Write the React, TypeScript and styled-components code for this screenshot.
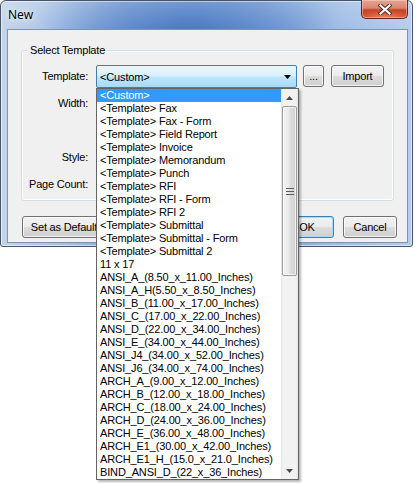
import React from 'react';
import styled, { createGlobalStyle } from 'styled-components';

const Global = createGlobalStyle`
  html, body { margin: 0; padding: 0; background: #ffffff; }
  body {
    font-family: "Liberation Sans", Arial, sans-serif;
    font-size: 11px;
    color: #000;
  }
  * { box-sizing: border-box; }
`;

const Page = styled.div`
  width: 416px;
  height: 483px;
  position: relative;
`;

const Window = styled.div`
  width: 413px;
  height: 247px;
  border: 1px solid #44556b;
  border-radius: 6px 6px 3px 3px;
  display: flex;
  flex-direction: column;
  background:
    linear-gradient(to bottom, rgba(255, 255, 255, 0.18) 0%, rgba(255, 255, 255, 0) 30px),
    radial-gradient(ellipse 150px 70px at 45% 10%, rgba(70, 118, 192, 0.9) 0%, rgba(80, 126, 198, 0.5) 55%, rgba(90, 134, 200, 0) 100%),
    linear-gradient(to right, #c4d4ea 0%, #a9c2e6 14%, #7ba2d8 32%, #6490cf 48%, #7aa1d8 64%, #a1bee6 84%, #b6cdea 100%);
  box-shadow: inset 0 0 0 1px rgba(255, 255, 255, 0.5);
`;

const TitleBar = styled.div`
  height: 28px;
  display: flex;
  align-items: flex-start;
  justify-content: space-between;
  padding: 0 4px 0 7px;
`;

const Title = styled.div`
  font-family: "Noto Sans", "Open Sans", sans-serif;
  font-size: 12px;
  line-height: 28px;
  color: #000;
  text-shadow: 0 0 8px rgba(255, 255, 255, 0.9), 0 0 3px rgba(255, 255, 255, 0.8);
`;

const CloseButton = styled.div`
  width: 47px;
  height: 19px;
  margin-top: -1px;
  border: 1px solid #5a2a22;
  border-top: none;
  border-radius: 0 0 5px 5px;
  background:
    radial-gradient(ellipse 30px 8px at 50% 100%, rgba(255, 140, 90, 0.8), rgba(255, 120, 80, 0) 100%),
    linear-gradient(to bottom, #e3a593 0%, #d88672 45%, #c5452b 55%, #c9472c 100%);
  box-shadow: inset 0 0 0 1px rgba(255, 220, 210, 0.45);
  display: flex;
  align-items: center;
  justify-content: center;
`;

const Client = styled.div`
  flex: 1;
  margin: 0 4px 3px 6px;
  border: 1px solid #7f93ad;
  background: #f0f0f0;
  display: flex;
  flex-direction: column;
`;

const Group = styled.div`
  position: relative;
  margin: 20px 0 0 13px;
  width: 373px;
  height: 151px;
  border: 1px solid #d5dfe5;
  border-radius: 3px;
  box-shadow: inset 0 0 0 1px #ffffff;
  padding-top: 14px;
`;

const Legend = styled.div`
  position: absolute;
  left: 6px;
  top: -8px;
  padding: 0 2px;
  background: #f0f0f0;
  line-height: 14px;
  letter-spacing: -0.2px;
`;

const FormGrid = styled.div`
  display: grid;
  grid-template-columns: 66px 1fr;
  grid-auto-rows: 22px;
  column-gap: 8px;
  row-gap: 5px;
`;

const Label = styled.div`
  text-align: right;
  line-height: 22px;
  letter-spacing: -0.2px;
  white-space: nowrap;
`;

const ControlRow = styled.div`
  display: flex;
  align-items: flex-start;
  gap: 6px;
`;

const ComboWrap = styled.div`
  position: relative;
  width: 201px;
  height: 23px;
`;

const Combo = styled.div`
  width: 100%;
  height: 23px;
  border: 1px solid #3c7fb1;
  border-radius: 2px;
  background: linear-gradient(to bottom, #eaf6fd 0%, #d9f0fc 45%, #bee6fd 55%, #a7d9f5 100%);
  display: flex;
  align-items: center;
  justify-content: space-between;
  padding: 0 5px 0 3px;
  letter-spacing: -0.15px;
`;

const Arrow = styled.svg`
  display: block;
`;

const Button = styled.div<{ $w: number; $default?: boolean }>`
  width: ${(p) => p.$w}px;
  height: 22px;
  border: 1px solid ${(p) => (p.$default ? '#3c7fb1' : '#707070')};
  border-radius: 3px;
  background: linear-gradient(to bottom, #f2f2f2 0%, #ebebeb 50%, #dddddd 51%, #cfcfcf 100%);
  box-shadow: inset 0 0 0 1px ${(p) => (p.$default ? '#a6dcf7' : 'rgba(255,255,255,0.75)')};
  display: flex;
  align-items: center;
  justify-content: center;
  letter-spacing: -0.2px;
  white-space: nowrap;
  flex: none;
`;

const ImportButton = styled(Button)`
  margin-left: 1px;
`;

const ButtonBar = styled.div`
  display: flex;
  align-items: center;
  margin: 15px 10px 0 14px;
  gap: 9px;
`;

const Spacer = styled.div`
  flex: 1;
`;

const DropList = styled.div`
  position: absolute;
  top: 100%;
  left: 0;
  width: 203px;
  height: 392px;
  border: 1px solid #646464;
  background: #ffffff;
  box-shadow: 2px 2px 2px rgba(0, 0, 0, 0.28);
  display: flex;
  z-index: 10;
`;

const Items = styled.div`
  flex: 1;
  display: flex;
  flex-direction: column;
  overflow: hidden;
`;

const Item = styled.div<{ $selected?: boolean }>`
  height: 13px;
  flex: none;
  line-height: 13px;
  padding-left: 3px;
  white-space: nowrap;
  letter-spacing: -0.15px;
  background: ${(p) => (p.$selected ? '#3399ff' : 'transparent')};
  color: ${(p) => (p.$selected ? '#ffffff' : '#000000')};
`;

const ScrollBar = styled.div`
  width: 17px;
  display: flex;
  flex-direction: column;
  background: linear-gradient(to right, #e4e4e4 0px, #f2f2f2 2px, #f2f2f2 15px, #e4e4e4 17px);
`;

const ScrollButton = styled.div`
  height: 17px;
  flex: none;
  display: flex;
  align-items: center;
  justify-content: center;
`;

const Thumb = styled.div`
  height: 170px;
  margin: 0 1px;
  flex: none;
  border: 1px solid #9c9c9c;
  border-radius: 2px;
  background: linear-gradient(to right, #f4f4f4 0%, #e9e9e9 45%, #dcdcdc 55%, #d2d2d2 100%);
  box-shadow: inset 0 0 0 1px rgba(255, 255, 255, 0.7);
  display: flex;
  align-items: center;
  justify-content: center;
`;

const Track = styled.div`
  flex: 1;
`;

const items = [
  '<Custom>',
  '<Template> Fax',
  '<Template> Fax - Form',
  '<Template> Field Report',
  '<Template> Invoice',
  '<Template> Memorandum',
  '<Template> Punch',
  '<Template> RFI',
  '<Template> RFI - Form',
  '<Template> RFI 2',
  '<Template> Submittal',
  '<Template> Submittal - Form',
  '<Template> Submittal 2',
  '11 x 17',
  'ANSI_A_(8.50_x_11.00_Inches)',
  'ANSI_A_H(5.50_x_8.50_Inches)',
  'ANSI_B_(11.00_x_17.00_Inches)',
  'ANSI_C_(17.00_x_22.00_Inches)',
  'ANSI_D_(22.00_x_34.00_Inches)',
  'ANSI_E_(34.00_x_44.00_Inches)',
  'ANSI_J4_(34.00_x_52.00_Inches)',
  'ANSI_J6_(34.00_x_74.00_Inches)',
  'ARCH_A_(9.00_x_12.00_Inches)',
  'ARCH_B_(12.00_x_18.00_Inches)',
  'ARCH_C_(18.00_x_24.00_Inches)',
  'ARCH_D_(24.00_x_36.00_Inches)',
  'ARCH_E_(36.00_x_48.00_Inches)',
  'ARCH_E1_(30.00_x_42.00_Inches)',
  'ARCH_E1_H_(15.0_x_21.0_Inches)',
  'BIND_ANSI_D_(22_x_36_Inches)',
];

const CloseGlyph = () => (
  <svg width="14" height="11" viewBox="0 0 14 11">
    <path d="M2.5 1.5 L11.5 9.5 M11.5 1.5 L2.5 9.5" stroke="#4a2a26" strokeWidth="4" strokeLinecap="square" />
    <path d="M2.5 1.5 L11.5 9.5 M11.5 1.5 L2.5 9.5" stroke="#ffffff" strokeWidth="2.2" strokeLinecap="square" />
  </svg>
);

const DownTri = ({ color = '#000' }: { color?: string }) => (
  <Arrow width="7" height="4" viewBox="0 0 7 4">
    <path d="M0 0 H7 L3.5 4 Z" fill={color} />
  </Arrow>
);

const UpTri = ({ color = '#000' }: { color?: string }) => (
  <Arrow width="7" height="4" viewBox="0 0 7 4">
    <path d="M0 4 H7 L3.5 0 Z" fill={color} />
  </Arrow>
);

const Grip = () => (
  <svg width="8" height="7" viewBox="0 0 8 7">
    <path d="M0 0.5 H8 M0 3.5 H8 M0 6.5 H8" stroke="#5d5d5d" strokeWidth="1" />
  </svg>
);

export default function App() {
  return (
    <Page>
      <Global />
      <Window>
        <TitleBar>
          <Title>New</Title>
          <CloseButton>
            <CloseGlyph />
          </CloseButton>
        </TitleBar>
        <Client>
          <Group>
            <Legend>Select Template</Legend>
            <FormGrid>
              <Label>Template:</Label>
              <ControlRow>
                <ComboWrap>
                  <Combo>
                    <span>&lt;Custom&gt;</span>
                    <DownTri />
                  </Combo>
                  <DropList>
                    <Items>
                      {items.map((t, i) => (
                        <Item key={t} $selected={i === 0}>
                          {t}
                        </Item>
                      ))}
                    </Items>
                    <ScrollBar>
                      <ScrollButton>
                        <UpTri color="#4a4a4a" />
                      </ScrollButton>
                      <Thumb>
                        <Grip />
                      </Thumb>
                      <Track />
                      <ScrollButton>
                        <DownTri color="#4a4a4a" />
                      </ScrollButton>
                    </ScrollBar>
                  </DropList>
                </ComboWrap>
                <Button $w={21}>...</Button>
                <ImportButton $w={53}>Import</ImportButton>
              </ControlRow>
              <Label>Width:</Label>
              <div />
              <Label />
              <div />
              <Label>Style:</Label>
              <div />
              <Label>Page Count:</Label>
              <div />
            </FormGrid>
          </Group>
          <ButtonBar>
            <Button $w={84}>Set as Default</Button>
            <Spacer />
            <Button $w={54} $default>
              OK
            </Button>
            <Button $w={54}>Cancel</Button>
          </ButtonBar>
        </Client>
      </Window>
    </Page>
  );
}
